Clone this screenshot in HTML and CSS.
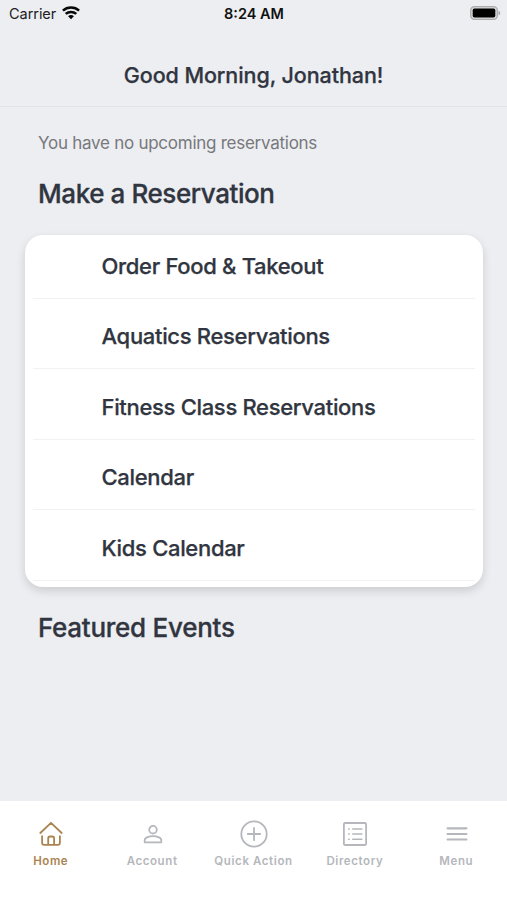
FILE: index.html
```html
<!DOCTYPE html>
<html lang="en">
<head>
<meta charset="utf-8">
<title>Home</title>
<link rel="stylesheet" href="styles.css">
</head>
<body>
<div class="app">
  <div class="status">
    <div class="carrier"><span>Carrier</span>
      <svg width="18" height="14" viewBox="0 0 18 14" fill="none" stroke="#080808" stroke-width="2.5"><path d="M.9 4.7C5.4.5 12.6.5 17.1 4.7"/><path d="M3.7 7.9C6.7 5.2 11.3 5.2 14.3 7.9"/><path d="M6.1 10.2C7.7 8.7 10.3 8.7 11.9 10.2L9 13.2z" fill="#080808" stroke="none"/></svg>
    </div>
    <div class="time">8:24 AM</div>
    <svg class="battery" width="31" height="14" viewBox="0 0 31 14"><rect x=".7" y=".7" width="26.6" height="12.6" rx="3.6" fill="#d8d8da" stroke="#adadaf" stroke-width="1.3"/><rect x="2.7" y="2.5" width="22.6" height="9" rx="1.8" fill="#000"/><path d="M28.5 4.7C30.8 5.6 30.8 8.4 28.5 9.3z" fill="#a8a8aa"/></svg>
  </div>
  <header class="greeting"><h1>Good Morning, Jonathan!</h1></header>
  <main class="content">
    <p class="note">You have no upcoming reservations</p>
    <h2 class="make">Make a Reservation</h2>
    <ul class="card">
      <li>Order Food &amp; Takeout</li>
      <li>Aquatics Reservations</li>
      <li>Fitness Class Reservations</li>
      <li>Calendar</li>
      <li>Kids Calendar</li>
    </ul>
    <h2 class="featured">Featured Events</h2>
  </main>
  <nav class="tabs">
    <a class="tab active">
      <svg width="28" height="28" viewBox="0 0 28 28"><path d="M3.3 13 14 2.8 24.7 13M5.1 16.2v6.5q0 2.1 2.1 2.1H20.8q2.1 0 2.1-2.1V16.2M11.2 24.7V18.4q0-1.9 1.9-1.9h2.1q1.9 0 1.9 1.9v6.3"/></svg>
      <span>Home</span></a>
    <a class="tab">
      <svg width="28" height="28" viewBox="0 0 28 28"><circle cx="14" cy="9.7" r="3.8"/><path d="M5.7 22.3v-2.1c0-2.7 4.8-4 8.3-4s8.3 1.3 8.3 4v2.1z"/></svg>
      <span>Account</span></a>
    <a class="tab">
      <svg width="28" height="28" viewBox="0 0 28 28"><circle cx="14" cy="14" r="12.7"/><path d="M14 7.8v12.4M7.8 14h12.4"/></svg>
      <span>Quick Action</span></a>
    <a class="tab">
      <svg width="28" height="28" viewBox="0 0 28 28"><rect x="2.9" y="3" width="22.2" height="22" rx="1.2"/><path stroke-width="1.5" d="M11.7 9h9.2M11.7 14h9.2M11.7 19.2h9.2M7.6 9h.6M7.6 14h.6M7.6 19.2h.6"/></svg>
      <span>Directory</span></a>
    <a class="tab">
      <svg width="28" height="28" viewBox="0 0 28 28"><path stroke-width="2.2" d="M4.6 8.3h18.8M4.6 14h18.8M4.6 19.5h18.8"/></svg>
      <span>Menu</span></a>
  </nav>
</div>
</body>
</html>
```
FILE: styles.css
```css
* { box-sizing: border-box; }
body { margin: 0; font-family: Inter, "Liberation Sans", sans-serif; background: #edeef2; color: #303540; }
h1, h2, p, ul { margin: 0; padding: 0; }
.app { height: 900px; display: flex; flex-direction: column; white-space: nowrap; overflow: hidden; }
.status { height: 28px; display: grid; grid-template-columns: 1fr auto 1fr; align-items: center; padding: 0 6px 1px 9px; color: #202022; }
.carrier { display: flex; align-items: center; gap: 6px; font-size: 14.5px; letter-spacing: -.05px; }
.carrier svg { margin-top: -1px; }
.time { margin-left: -2px; font-size: 14.5px; font-weight: 600; color: #111; }
.battery { justify-self: end; margin-top: -1px; }
.greeting { height: 79px; display: flex; justify-content: center; padding-top: 33px; border-bottom: 1px solid #e1e2e5; }
.greeting h1 { font-size: 21.5px; line-height: 28px; font-weight: 500; letter-spacing: -.08px; -webkit-text-stroke: .25px; }
.content { flex: 1; padding: 25px 25px 0; }
.note { margin-left: 13px; font-size: 17px; line-height: 22px; letter-spacing: -.26px; color: #77787c; }
h2 { margin-left: 13px; font-size: 26px; line-height: 32px; font-weight: 500; letter-spacing: -.42px; -webkit-text-stroke: .3px; }
.make { margin-top: 24px; }
.card { height: 352px; margin-top: 25px; margin-right: -1px; padding: 0 8px; list-style: none; background: #fff; border-radius: 18px; box-shadow: 0 4px 10px rgba(0, 0, 0, .14); }
.card li { height: 70.5px; padding: 6px 0 0 68.5px; display: flex; align-items: center; border-bottom: 1px solid #f2f2f4; font-size: 22px; font-weight: 500; letter-spacing: -.32px; -webkit-text-stroke: .25px; }
.card li:first-child { height: 63.5px; padding-top: 0; }
.featured { margin-top: 24.5px; letter-spacing: -.27px; }
.tabs { height: 99px; display: grid; grid-template-columns: repeat(5, 1fr); padding: 19px 0 0; background: #fff; }
.tab { display: flex; flex-direction: column; align-items: center; color: #b5b7bc; font-size: 11.5px; line-height: 16px; font-weight: 600; }
.tab svg { fill: none; stroke: currentColor; stroke-width: 1.8; stroke-linecap: round; stroke-linejoin: round; margin-left: 1px; }
.tab span { margin-top: 5px; letter-spacing: .6px; }
.active { color: #aa8450; }
```
